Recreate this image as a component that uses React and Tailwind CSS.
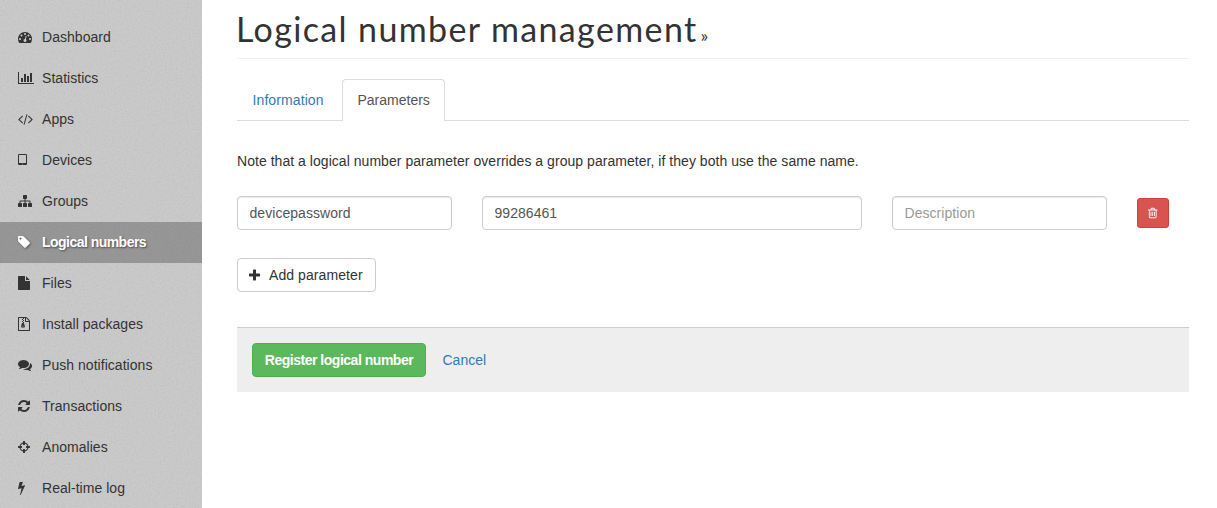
const icons = {
  tachometer: [1792, "M384 1152q0-53-37.5-90.5t-90.5-37.5-90.5 37.5-37.5 90.5 37.5 90.5 90.5 37.5 90.5-37.5 37.5-90.5zm192-448q0-53-37.5-90.5t-90.5-37.5-90.5 37.5-37.5 90.5 37.5 90.5 90.5 37.5 90.5-37.5 37.5-90.5zm428 481l101-382q6-26-7.5-48.5t-38.5-29.5-48 6.5-30 39.5l-101 382q-60 5-107 43.5t-63 98.5q-20 77 20 146t117 89 146-20 89-117q16-60-6-117t-72-91zm660-33q0-53-37.5-90.5t-90.5-37.5-90.5 37.5-37.5 90.5 37.5 90.5 90.5 37.5 90.5-37.5 37.5-90.5zm-640-640q0-53-37.5-90.5t-90.5-37.5-90.5 37.5-37.5 90.5 37.5 90.5 90.5 37.5 90.5-37.5 37.5-90.5zm448 192q0-53-37.5-90.5t-90.5-37.5-90.5 37.5-37.5 90.5 37.5 90.5 90.5 37.5 90.5-37.5 37.5-90.5zm320 448q0 261-141 483-19 29-54 29h-1402q-35 0-54-29-141-221-141-483 0-182 71-348t191-286 286-191 348-71 348 71 286 191 191 286 71 348z"],
  chart: [2048, "M640 896v512h-256v-512h256zm384-512v1024h-256v-1024h256zm1024 1152v128h-2048v-1536h128v1408h1920zm-640-896v768h-256v-768h256zm384-384v1152h-256v-1152h256z"],
  code: [1920, "M617 1399l-50 50q-10 10-23 10t-23-10l-466-466q-10-10-10-23t10-23l466-466q10-10 23-10t23 10l50 50q10 10 10 23t-10 23l-393 393 393 393q10 10 10 23t-10 23zm591-1067l-373 1291q-4 13-15.5 19.5t-23.5 2.5l-62-17q-13-4-19.5-15.5t-2.5-24.5l373-1291q4-13 15.5-19.5t23.5-2.5l62 17q13 4 19.5 15.5t2.5 24.5zm657 651l-466 466q-10 10-23 10t-23-10l-50-50q-10-10-10-23t10-23l393-393-393-393q-10-10-10-23t10-23l50-50q10-10 23-10t23 10l466 466q10 10 10 23t-10 23z"],
  tablet: [1152, "M640 1408q0-26-19-45t-45-19-45 19-19 45 19 45 45 19 45-19 19-45zm384-160v-960q0-13-9.5-22.5t-22.5-9.5h-832q-13 0-22.5 9.5t-9.5 22.5v960q0 13 9.5 22.5t22.5 9.5h832q13 0 22.5-9.5t9.5-22.5zm128-960v1088q0 66-47 113t-113 47h-832q-66 0-113-47t-47-113v-1088q0-66 47-113t113-47h832q66 0 113 47t47 113z"],
  sitemap: [1792, "M1792 1248v320q0 40-28 68t-68 28h-320q-40 0-68-28t-28-68v-320q0-40 28-68t68-28h96v-192h-512v192h96q40 0 68 28t28 68v320q0 40-28 68t-68 28h-320q-40 0-68-28t-28-68v-320q0-40 28-68t68-28h96v-192h-512v192h96q40 0 68 28t28 68v320q0 40-28 68t-68 28h-320q-40 0-68-28t-28-68v-320q0-40 28-68t68-28h96v-192q0-52 38-90t90-38h512v-192h-96q-40 0-68-28t-28-68v-320q0-40 28-68t68-28h320q40 0 68 28t28 68v320q0 40-28 68t-68 28h-96v192h512q52 0 90 38t38 90v192h96q40 0 68 28t28 68z"],
  tag: [1536, "M448 448q0-53-37.5-90.5t-90.5-37.5-90.5 37.5-37.5 90.5 37.5 90.5 90.5 37.5 90.5-37.5 37.5-90.5zm1067 576q0 53-37 90l-491 492q-39 37-91 37-53 0-90-37l-715-716q-38-37-64.5-101t-26.5-117v-416q0-52 38-90t90-38h416q53 0 117 26.5t102 64.5l715 714q37 39 37 91z"],
  file: [1536, "M1024 512v-472q22 14 36 28l408 408q14 14 28 36h-472zm-128 32q0 40 28 68t68 28h544v1056q0 40-28 68t-68 28h-1344q-40 0-68-28t-28-68v-1600q0-40 28-68t68-28h800v544z"],
  archive: [1536, "M1468 380q28 28 48 76t20 88v1152q0 40-28 68t-68 28h-1344q-40 0-68-28t-28-68v-1600q0-40 28-68t68-28h896q40 0 88 20t76 48zm-444-244v376h376q-10-29-22-41l-313-313q-12-12-41-22zm384 1528v-1024h-416q-40 0-68-28t-28-68v-416h-128v128h-128v-128h-512v1536h1280zM512 256h128v128h-128zM640 384h128v128h-128zM512 512h128v128h-128zM640 640h128v128h-128zM512 768h224q25 0 32 24l107 349q21 75-14 135t-101 92-120 32-120-32-101-92-14-135q18-54 107-373zM640 1344q53 0 90.500-19t37.500-45-37.500-45-90.500-19-90.500 19-37.500 45 37.500 45 90.500 19z"],
  comments: [1792, "M1408 768q0 139-94 257t-256.500 186.500-353.500 68.500q-86 0-176-16-124 88-278 128-36 9-86 16h-3q-11 0-20.500-8t-11.500-21q-1-3-1-6.500t.5-6.500 2-6l2.500-5 3.500-5.500 4-5 4.500-5 4-4.500q5-6 23-25t26-29.500 22.500-29 25-38.500 20.500-44q-124-72-195-177t-71-224q0-139 94-257t256.500-186.500 353.500-68.500 353.500 68.500 256.500 186.500 94 257zm384 256q0 120-71 224.500t-195 176.500q10 24 20.500 44t25 38.500 22.500 29 26 29.500 23 25q1 1 4 4.500t4.500 5 4 5 3.500 5.500l2.500 5 2 6 .5 6.500-1 6.500q-3 14-13 22t-22 7q-50-7-86-16-154-40-278-128-90 16-176 16-271 0-472-132 58 4 88 4 161 0 309-45t264-129q125-92 192-212t67-254q0-77-23-152 129 71 204 178t75 230z"],
  refresh: [1536, "M1511 1056q0 5-1 7-64 268-268 434.500t-478 166.500q-146 0-282.500-55t-243.500-157l-129 129q-19 19-45 19t-45-19-19-45v-448q0-26 19-45t45-19h448q26 0 45 19t19 45-19 45l-137 137q71 66 161 102t187 36q134 0 250-65t186-179q11-17 53-117 8-23 30-23h192q13 0 22.500 9.500t9.500 22.500zm25-800v448q0 26-19 45t-45 19h-448q-26 0-45-19t-19-45 19-45l138-138q-148-137-349-137-134 0-250 65t-186 179q-11 17-53 117-8 23-30 23h-199q-13 0-22.500-9.500t-9.500-22.500v-7q65-268 270-434.500t480-166.500q146 0 284 55.500t245 156.500l130-129q19-19 45-19t45 19 19 45z"],
  crosshairs: [1536, "M1197 1024h-109q-26 0-45-19t-19-45v-128q0-26 19-45t45-19h109q-32-108-112.500-188.500t-188.500-112.500v109q0 26-19 45t-45 19h-128q-26 0-45-19t-19-45v-109q-108 32-188.500 112.500t-112.500 188.500h109q26 0 45 19t19 45v128q0 26-19 45t-45 19h-109q32 108 112.500 188.500t188.500 112.500v-109q0-26 19-45t45-19h128q26 0 45 19t19 45v109q108-32 188.500-112.500t112.500-188.500zm339-192v128q0 26-19 45t-45 19h-143q-37 161-154.500 278.500t-278.500 154.500v143q0 26-19 45t-45 19h-128q-26 0-45-19t-19-45v-143q-161-37-278.500-154.500t-154.500-278.500h-143q-26 0-45-19t-19-45v-128q0-26 19-45t45-19h143q37-161 154.500-278.500t278.500-154.500v-143q0-26 19-45t45-19h128q26 0 45 19t19 45v143q161 37 278.500 154.500t154.500 278.500h143q26 0 45 19t19 45z"],
  bolt: [896, "M885 566q18 20 7 44l-540 1157q-13 25-42 25-4 0-14-2-17-5-25.500-19t-4.500-30l197-808-406 101q-4 1-12 1-18 0-31-11-18-15-13-39l201-825q4-14 16-23t28-9h328q19 0 32 12.500t13 29.500q0 8-5 18l-171 463 396-98q8-2 12-2 19 0 34 15z"],
  plus: [1408, "M1408 800v192q0 40-28 68t-68 28h-416v416q0 40-28 68t-68 28h-192q-40 0-68-28t-28-68v-416h-416q-40 0-68-28t-28-68v-192q0-40 28-68t68-28h416v-416q0-40 28-68t68-28h192q40 0 68 28t28 68v416h416q40 0 68 28t28 68z"],
  trash: [1408, "M512 736v576q0 14-9 23t-23 9h-64q-14 0-23-9t-9-23v-576q0-14 9-23t23-9h64q14 0 23 9t9 23zm256 0v576q0 14-9 23t-23 9h-64q-14 0-23-9t-9-23v-576q0-14 9-23t23-9h64q14 0 23 9t9 23zm256 0v576q0 14-9 23t-23 9h-64q-14 0-23-9t-9-23v-576q0-14 9-23t23-9h64q14 0 23 9t9 23zm128 724v-948h-896v948q0 22 7 40.500t14.500 27 10.500 8.500h832q3 0 10.500-8.500t14.500-27 7-40.500zm-672-1076h448l-48-117q-7-9-17-11h-317q-10 2-17 11zm928 32v64q0 14-9 23t-23 9h-96v948q0 83-47 143.500t-113 60.500h-832q-66 0-113-58.500t-47-141.500v-952h-96q-14 0-23-9t-9-23v-64q0-14 9-23t23-9h309l70-167q15-37 54-63t79-26h320q40 0 79 26t54 63l70 167h309q14 0 23 9t9 23z"],
};

function Icon({ name, size = 14, className = "" }) {
  const [width, d] = icons[name];
  return (
    <svg
      width={(width * size) / 1792}
      height={size}
      viewBox={`0 0 ${width} 1792`}
      fill="currentColor"
      className={`shrink-0 ${className}`}
      aria-hidden="true"
    >
      <path d={d} />
    </svg>
  );
}

const navItems = [
  ["tachometer", "Dashboard"],
  ["chart", "Statistics"],
  ["code", "Apps"],
  ["tablet", "Devices"],
  ["sitemap", "Groups"],
  ["tag", "Logical numbers"],
  ["file", "Files"],
  ["archive", "Install packages"],
  ["comments", "Push notifications"],
  ["refresh", "Transactions"],
  ["crosshairs", "Anomalies"],
  ["bolt", "Real-time log"],
];

function Sidebar() {
  return (
    <aside className="relative h-full w-[202px] shrink-0 overflow-hidden bg-[#c7c7c7] pt-[17px]">
      <svg className="absolute inset-0 h-full w-full opacity-5" aria-hidden="true">
        <filter id="grain">
          <feTurbulence type="fractalNoise" baseFrequency="0.55" numOctaves="2" seed="4" />
          <feColorMatrix type="matrix" values="2 0 0 0 -0.25  2 0 0 0 -0.25  2 0 0 0 -0.25  0 0 0 0 1" />
        </filter>
        <rect width="100%" height="100%" filter="url(#grain)" />
      </svg>
      <nav className="relative">
        {navItems.map(([icon, label]) => {
          const active = label === "Logical numbers";
          return (
            <a
              key={label}
              className={`flex h-[41px] items-center pb-0.5 pl-[18px] ${
                active
                  ? "bg-black/25 text-white [text-shadow:1px_1px_2px_rgba(0,0,0,0.5)]"
                  : "text-[#333]"
              }`}
            >
              <span className="flex w-6 shrink-0">
                <Icon name={icon} className={active ? "drop-shadow-[1px_1px_1px_rgba(0,0,0,0.4)]" : ""} />
              </span>
              <span className={active ? "font-bold tracking-[-0.53px]" : "tracking-[0.04px]"}>{label}</span>
            </a>
          );
        })}
      </nav>
    </aside>
  );
}

const field =
  "h-[34px] rounded border border-[#ccc] bg-white pr-3 pl-[11.5px] text-sm tracking-[0.05px] text-[#555] shadow-[inset_0_1px_1px_rgba(0,0,0,0.075)] outline-none placeholder:text-[#999]";

export default function App() {
  return (
    <div className="flex h-[508px] w-[1217px] overflow-hidden bg-white font-['Liberation_Sans',Arial,sans-serif] text-sm leading-5 text-[#333]">
      <Sidebar />
      <main className="flex-1 pr-7 pl-[35px]">
        <header className="flex h-[59px] items-baseline border-b border-[#eee] pt-[9px]">
          <h1 className="-ml-px font-[Lato,sans-serif] text-[34px] leading-[40px] tracking-[1.37px]">
            Logical number management
          </h1>
          <span className="ml-[3px] font-[Lato,sans-serif] text-lg leading-5">»</span>
        </header>

        <div className="mt-5 flex h-[42px] border-b border-[#ddd]">
          <a className="mr-0.5 h-[42px] w-[103px] border border-transparent pt-[10px] pl-[14.5px] text-[#337ab7] tracking-[0.1px]">
            Information
          </a>
          <a className="h-[42px] w-[103px] rounded-t border border-b-0 border-[#ddd] bg-white pt-[10px] pl-[14.5px] text-[#555]">
            Parameters
          </a>
        </div>

        <p className="mt-[30px] tracking-[0.04px]">
          Note that a logical number parameter overrides a group parameter, if they both use the same name.
        </p>

        <div className="mt-[25px] flex items-center gap-[30px]">
          <input className={`${field} w-[215px]`} defaultValue="devicepassword" />
          <input className={`${field} w-[380px]`} defaultValue="99286461" />
          <input className={`${field} w-[215px]`} placeholder="Description" />
          <button className="flex h-[30px] w-8 items-center justify-center rounded-[3px] border border-[#d43f3a] bg-[#d9534f] text-white">
            <Icon name="trash" size={12} />
          </button>
        </div>

        <button className="mt-7 flex h-[34px] w-[139px] items-center rounded border border-[#ccc] bg-white pl-[11px]">
          <Icon name="plus" />
          <span className="ml-[9px] tracking-[0.08px]">Add parameter</span>
        </button>

        <footer className="mt-[35px] flex h-[65px] items-center border-t border-[#ccc] bg-[#eee] px-[15px]">
          <button className="h-[34px] w-[174px] rounded border border-[#4cae4c] bg-[#5cb85c] font-bold tracking-[-0.48px] text-white">
            Register logical number
          </button>
          <a className="ml-[16.5px] text-[#337ab7]">Cancel</a>
        </footer>
      </main>
    </div>
  );
}
